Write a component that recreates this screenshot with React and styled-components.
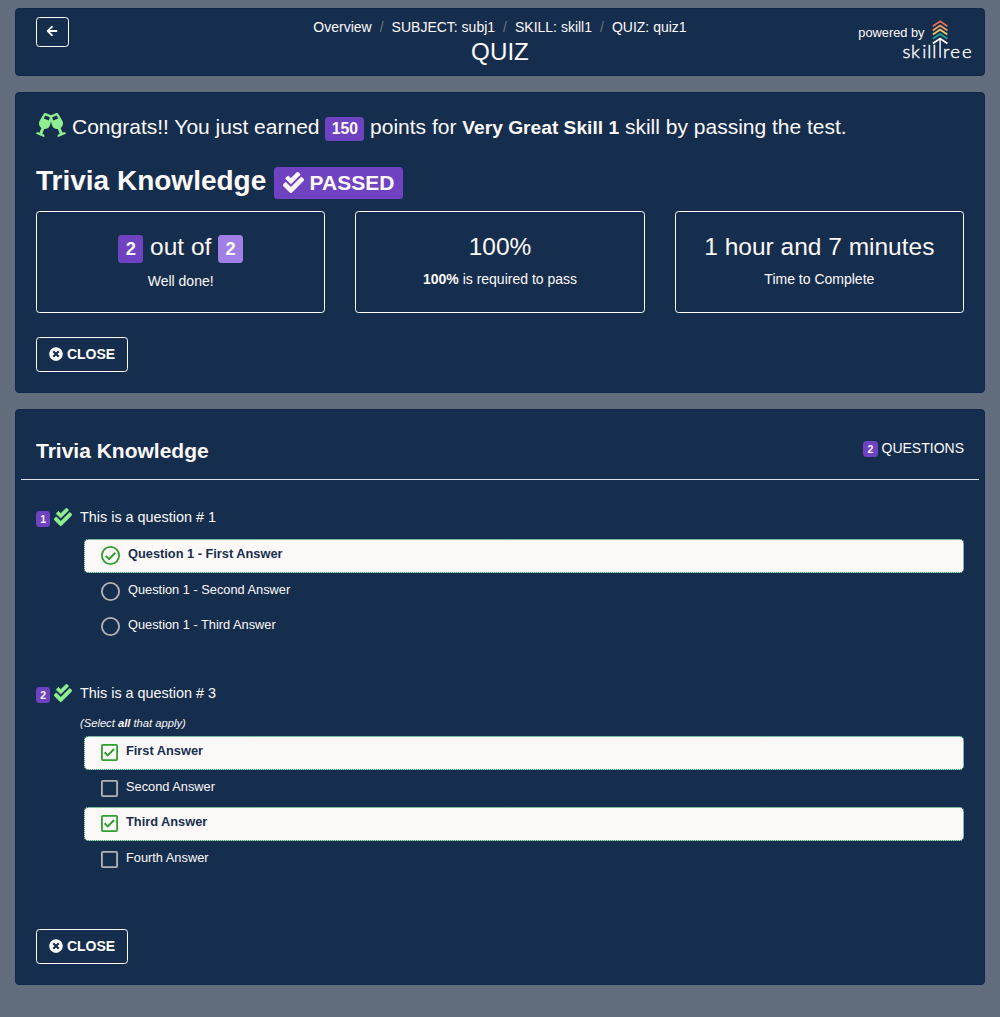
import React from "react";
import styled, { createGlobalStyle, css } from "styled-components";
import { FaArrowLeft, FaCheckDouble, FaGlassCheers, FaTimesCircle } from "react-icons/fa";

const GlobalStyle = createGlobalStyle`
  *, *::before, *::after { box-sizing: border-box; }
  body {
    margin: 0;
    background: #626d7d;
    color: #fdf9f9;
    font: 14px/1.5 "Liberation Sans", Arial, sans-serif;
  }
  svg { display: block; }
`;

const Page = styled.main`
  display: flex;
  flex-direction: column;
  gap: 16px;
  padding: 8px 15px 32px;
`;

const Card = styled.section`
  background: #162e4e;
  border: 1px solid #12284a;
  border-radius: 4px;
  padding: 20px;
  height: ${(p) => p.$height}px;
`;

const HeaderCard = styled(Card).attrs({ as: "header" })`
  display: grid;
  grid-template-columns: 1fr auto 1fr;
  align-items: start;
  padding: 8px 11px 0 20px;
`;

const OutlineButton = styled.button`
  display: inline-flex;
  align-items: center;
  justify-content: center;
  gap: 4px;
  width: ${(p) => p.$width}px;
  height: ${(p) => p.$height}px;
  padding: 0 0 1px;
  color: #fff;
  background: transparent;
  border: 1px solid #fff;
  border-radius: 3.5px;
  font: bold 14px/21px "Liberation Sans", Arial, sans-serif;
`;

const BackArrow = styled(FaArrowLeft)`
  margin: -1px 1px 0 0;
`;

const HeaderCenter = styled.div`
  text-align: center;
  padding-right: 9px;
`;

const Crumbs = styled.nav`
  display: flex;
  gap: 8px;
  line-height: 21px;
`;

const Slash = styled.span`
  color: #6c757d;
`;

const PageTitle = styled.h1`
  margin: 0;
  font-size: 24.2px;
  font-weight: 400;
  line-height: 27.6px;
`;

const Powered = styled.div`
  display: flex;
  justify-content: flex-end;
  align-items: flex-start;
  padding-top: 3px;
`;

const PoweredText = styled.span`
  margin: 3px -22.5px 0 0;
  font-size: 12.8px;
  line-height: 19px;
`;

const Congrats = styled.p`
  display: flex;
  align-items: flex-start;
  margin: 0;
  height: 41px;
  font-size: 21px;
  line-height: 28px;
  white-space: pre;
`;

const CheersIcon = styled(FaGlassCheers)`
  width: 30px;
  height: 24px;
  margin-right: 6px;
  color: #90ee90;
`;

const SkillName = styled.strong`
  font-size: 19.2px;
`;

const Badge = styled.span`
  display: inline-block;
  padding: 0.25em 0.4em;
  border-radius: 3.5px;
  font-size: 75%;
  font-weight: 700;
  line-height: 1;
  color: #fdf9f9;
  background: ${(p) => (p.$light ? "#a27fe6" : "#6f42c1")};
`;

const DoubleCheck = styled(FaCheckDouble)`
  display: inline-block;
  vertical-align: -0.125em;
  stroke: currentColor;
  stroke-width: 14px;
`;

const ResultTitle = styled.h2`
  display: flex;
  align-items: flex-start;
  gap: 8px;
  margin: 10px 0 11px;
  height: 36px;
  font-size: 28px;
  line-height: 33.6px;
`;

const ResultBadge = styled(Badge)`
  width: 129px;
  height: 32px;
  margin-top: 3px;
  padding-left: 8.5px;
  white-space: nowrap;
`;

const Stats = styled.div`
  display: grid;
  grid-template-columns: repeat(3, 1fr);
  gap: 30px;
  height: 102px;
  margin-bottom: 24px;
`;

const Stat = styled.div`
  border: 1px solid #fff;
  border-radius: 3.5px;
  padding-top: 20px;
  text-align: center;
`;

const StatValue = styled.div`
  font-size: 24.5px;
  line-height: 29.4px;
  margin-bottom: 8px;
`;

const QuizHeader = styled.div`
  display: flex;
  justify-content: space-between;
  align-items: flex-start;
  margin: -20px -15px 0;
  padding: 28px 15px 0;
  height: 70px;
  border-bottom: 1px solid #dfe5ea;
`;

const QuizTitle = styled.h3`
  margin: 0;
  font-size: 21px;
  line-height: 26px;
`;

const Questions = styled.div`
  padding-top: 27px;
`;

const Question = styled.article`
  height: ${(p) => p.$height}px;
`;

const QuestionHead = styled.div`
  display: flex;
  align-items: flex-start;
`;

const QuestionMark = styled.div`
  display: flex;
  gap: 4px;
  width: 44px;
  color: #90ee90;

  ${Badge} {
    font-size: 10.5px;
    height: 16px;
    margin-top: 4px;
  }

  ${DoubleCheck} {
    margin-top: 0.5px;
  }
`;

const QuestionText = styled.div`
  font-size: 14.4px;
  line-height: 21px;
`;

const Hint = styled.div`
  margin: 11px 0 0 44px;
  font-size: 11.2px;
  line-height: 17px;
  font-style: italic;
`;

const Answers = styled.div`
  display: flex;
  flex-direction: column;
  gap: 1.5px;
  margin: ${(p) => p.$top}px 0 0 48px;
`;

const Answer = styled.div`
  display: flex;
  align-items: flex-start;
  gap: 8px;
  height: 34px;
  padding: 5px 16px 0;
  border: 1px dotted transparent;
  border-radius: 4.5px;
  font-size: 12.8px;
  line-height: 18px;

  svg { margin-top: ${(p) => (p.$multi ? 2 : 1)}px; }

  ${(p) =>
    p.$selected &&
    css`
      color: #162e4e;
      background: #fdf9f9;
      border-color: #007c49;
      font-weight: 700;
    `}
`;

const GREEN = "#2e9e2e";
const GREY = "#b3b3b3";

function ChoiceIcon({ multi, selected }) {
  const color = selected ? GREEN : GREY;
  if (multi) {
    return (
      <svg width="17" height="17" viewBox="0 0 17 17" fill="none" stroke={color} strokeWidth="1.8">
        <rect x="0.9" y="0.9" width="15.2" height="15.2" rx="1" />
        {selected && <path d="M3.6 8.2l3.2 3.2 6.3-6.4" strokeWidth="2" />}
      </svg>
    );
  }
  return (
    <svg width="19" height="19" viewBox="0 0 19 19" fill="none" stroke={color} strokeWidth="1.8">
      <circle cx="9.5" cy="9.5" r="8.6" />
      {selected && <path d="M4.8 9.9l3.2 3.2 6.3-6.4" strokeWidth="2" />}
    </svg>
  );
}

function Logo() {
  const chevrons = ["#e76f51", "#f4a261", "#e9c46a", "#2a9d8f"];
  return (
    <svg width="71" height="42" viewBox="0 0 71 42">
      <g fill="none" strokeWidth="1.8">
        {chevrons.map((c, i) => (
          <path key={c} d={`M30.8 ${6.2 + i * 4.2}l7.3-4.9 7.3 4.9`} stroke={c} />
        ))}
        <path d="M30.8 23.4l7.3-4.9 7.3 4.9" stroke="#fff" />
        <path d="M38.1 18.8v19" stroke="#fff" strokeWidth="1.4" />
      </g>
      <g fill="#fff" stroke="#fff" strokeWidth="0.4" fontFamily="Lato, sans-serif" fontSize="18.5" fontWeight="300">
        <text x="0.5 9 20.2 25.2 30.2" y="37.5">skill</text>
        <text x="41 48.2 60" y="37.5">ree</text>
      </g>
    </svg>
  );
}

function CloseButton() {
  return (
    <OutlineButton $width={92} $height={35}>
      <FaTimesCircle size={14} />
      CLOSE
    </OutlineButton>
  );
}

function QuizQuestion({ number, text, hint, answers, multi, height, top }) {
  return (
    <Question $height={height}>
      <QuestionHead>
        <QuestionMark>
          <Badge>{number}</Badge>
          <DoubleCheck size={18} />
        </QuestionMark>
        <QuestionText>{text}</QuestionText>
      </QuestionHead>
      {hint && (
        <Hint>
          (Select <b>all</b> that apply)
        </Hint>
      )}
      <Answers $top={top}>
        {answers.map(([label, selected]) => (
          <Answer key={label} $selected={selected} $multi={multi}>
            <ChoiceIcon multi={multi} selected={selected} />
            {label}
          </Answer>
        ))}
      </Answers>
    </Question>
  );
}

const crumbs = ["Overview", "SUBJECT: subj1", "SKILL: skill1", "QUIZ: quiz1"];

export default function App() {
  return (
    <Page>
      <GlobalStyle />
      <HeaderCard $height={68}>
        <OutlineButton $width={33} $height={30} aria-label="Back">
          <BackArrow size={12} />
        </OutlineButton>
        <HeaderCenter>
          <Crumbs>
            {crumbs.map((c, i) => (
              <React.Fragment key={c}>
                {i > 0 && <Slash>/</Slash>}
                <span>{c}</span>
              </React.Fragment>
            ))}
          </Crumbs>
          <PageTitle>QUIZ</PageTitle>
        </HeaderCenter>
        <Powered>
          <PoweredText>powered by</PoweredText>
          <Logo />
        </Powered>
      </HeaderCard>

      <Card $height={301}>
        <Congrats>
          <CheersIcon />
          <span>
            Congrats!! You just earned <Badge>150</Badge> points for <SkillName>Very Great Skill 1</SkillName> skill by
            passing the test.
          </span>
        </Congrats>
        <ResultTitle>
          Trivia Knowledge
          <ResultBadge>
            <DoubleCheck /> PASSED
          </ResultBadge>
        </ResultTitle>
        <Stats>
          <Stat>
            <StatValue>
              <Badge>2</Badge> out of <Badge $light>2</Badge>
            </StatValue>
            Well done!
          </Stat>
          <Stat>
            <StatValue>100%</StatValue>
            <b>100%</b> is required to pass
          </Stat>
          <Stat>
            <StatValue>1 hour and 7 minutes</StatValue>
            Time to Complete
          </Stat>
        </Stats>
        <CloseButton />
      </Card>

      <Card $height={576}>
        <QuizHeader>
          <QuizTitle>Trivia Knowledge</QuizTitle>
          <span>
            <Badge>2</Badge> QUESTIONS
          </span>
        </QuizHeader>
        <Questions>
          <QuizQuestion
            number={1}
            text="This is a question # 1"
            height={176}
            top={11}
            answers={[
              ["Question 1 - First Answer", true],
              ["Question 1 - Second Answer", false],
              ["Question 1 - Third Answer", false],
            ]}
          />
          <QuizQuestion
            number={2}
            text="This is a question # 3"
            hint
            multi
            height={246}
            top={4}
            answers={[
              ["First Answer", true],
              ["Second Answer", false],
              ["Third Answer", true],
              ["Fourth Answer", false],
            ]}
          />
        </Questions>
        <CloseButton />
      </Card>
    </Page>
  );
}
